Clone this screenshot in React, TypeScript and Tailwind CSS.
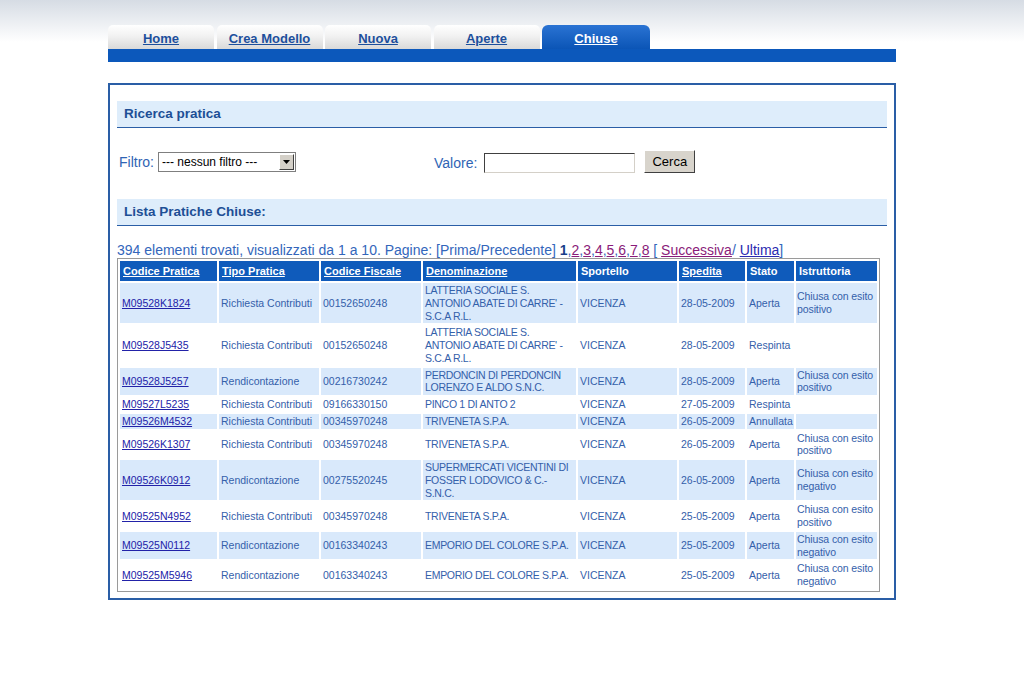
import React from "react";

// Pratiche chiuse — lista con ricerca
type Row = {
  codice: string;
  tipo: string;
  cf: string;
  denominazione: string;
  sportello: string;
  spedita: string;
  stato: string;
  istruttoria: string;
};

const rows: Row[] = [
  { codice: "M09528K1824", tipo: "Richiesta Contributi", cf: "00152650248", denominazione: "LATTERIA SOCIALE S. ANTONIO ABATE DI CARRE' - S.C.A R.L.", sportello: "VICENZA", spedita: "28-05-2009", stato: "Aperta", istruttoria: "Chiusa con esito positivo" },
  { codice: "M09528J5435", tipo: "Richiesta Contributi", cf: "00152650248", denominazione: "LATTERIA SOCIALE S. ANTONIO ABATE DI CARRE' - S.C.A R.L.", sportello: "VICENZA", spedita: "28-05-2009", stato: "Respinta", istruttoria: "" },
  { codice: "M09528J5257", tipo: "Rendicontazione", cf: "00216730242", denominazione: "PERDONCIN DI PERDONCIN LORENZO E ALDO S.N.C.", sportello: "VICENZA", spedita: "28-05-2009", stato: "Aperta", istruttoria: "Chiusa con esito positivo" },
  { codice: "M09527L5235", tipo: "Richiesta Contributi", cf: "09166330150", denominazione: "PINCO 1 DI ANTO 2", sportello: "VICENZA", spedita: "27-05-2009", stato: "Respinta", istruttoria: "" },
  { codice: "M09526M4532", tipo: "Richiesta Contributi", cf: "00345970248", denominazione: "TRIVENETA S.P.A.", sportello: "VICENZA", spedita: "26-05-2009", stato: "Annullata", istruttoria: "" },
  { codice: "M09526K1307", tipo: "Richiesta Contributi", cf: "00345970248", denominazione: "TRIVENETA S.P.A.", sportello: "VICENZA", spedita: "26-05-2009", stato: "Aperta", istruttoria: "Chiusa con esito positivo" },
  { codice: "M09526K0912", tipo: "Rendicontazione", cf: "00275520245", denominazione: "SUPERMERCATI VICENTINI DI FOSSER LODOVICO & C.- S.N.C.", sportello: "VICENZA", spedita: "26-05-2009", stato: "Aperta", istruttoria: "Chiusa con esito negativo" },
  { codice: "M09525N4952", tipo: "Richiesta Contributi", cf: "00345970248", denominazione: "TRIVENETA S.P.A.", sportello: "VICENZA", spedita: "25-05-2009", stato: "Aperta", istruttoria: "Chiusa con esito positivo" },
  { codice: "M09525N0112", tipo: "Rendicontazione", cf: "00163340243", denominazione: "EMPORIO DEL COLORE S.P.A.", sportello: "VICENZA", spedita: "25-05-2009", stato: "Aperta", istruttoria: "Chiusa con esito negativo" },
  { codice: "M09525M5946", tipo: "Rendicontazione", cf: "00163340243", denominazione: "EMPORIO DEL COLORE S.P.A.", sportello: "VICENZA", spedita: "25-05-2009", stato: "Aperta", istruttoria: "Chiusa con esito negativo" },
];

const tabs = ["Home", "Crea Modello", "Nuova", "Aperte", "Chiuse"];

const headers: { label: string; w: string; link: boolean }[] = [
  { label: "Codice Pratica", w: "w-[97px]", link: true },
  { label: "Tipo Pratica", w: "w-[100px]", link: true },
  { label: "Codice Fiscale", w: "w-[100px]", link: true },
  { label: "Denominazione", w: "w-[153px]", link: true },
  { label: "Sportello", w: "w-[99px]", link: false },
  { label: "Spedita", w: "w-[66px]", link: true },
  { label: "Stato", w: "w-[47px]", link: false },
  { label: "Istruttoria", w: "w-[81px]", link: false },
];

function SectionHeader({ title }: { title: string }) {
  return (
    <div className="h-[27px] bg-[#deedfb] border-b border-[#2a5ea6] pl-[7px] flex items-center text-[13.5px] font-bold text-[#1d4f96]">
      {title}
    </div>
  );
}

export default function App() {
  return (
    <div className="w-[1024px] h-[674px] bg-[linear-gradient(to_bottom,#d6dce4_0px,#ffffff_42px)] font-['Liberation_Sans',Arial,sans-serif]">
      <div className="ml-[108px] w-[788px] pt-[25px]">
        {/* tabs */}
        <div className="flex gap-[2.5px] h-[24px]">
          {tabs.map((t) => {
            const active = t === "Chiuse";
            return (
              <div
                key={t}
                className={
                  active
                    ? "w-[108px] rounded-t-[6px] bg-[linear-gradient(to_bottom,#2a73d3,#0b55b6)] flex items-center justify-center pt-[3px]"
                    : "w-[106px] rounded-t-[5px] bg-[linear-gradient(to_bottom,#ffffff_0%,#f2f2f2_45%,#d9d9d9_100%)] flex items-center justify-center pt-[3px]"
                }
              >
                <span
                  className={
                    active
                      ? "text-[13px] font-bold underline text-white"
                      : "text-[13px] font-bold underline text-[#1d4f9c]"
                  }
                >
                  {t}
                </span>
              </div>
            );
          })}
        </div>
        <div className="h-[13px] bg-[#0c58bb]" />

        {/* main box */}
        <div className="mt-[21px] h-[517px] border-2 border-[#2a5ea6] px-[7px] pt-[16px]">
          <SectionHeader title="Ricerca pratica" />

          <div className="mt-[22px] h-[23px] flex items-center text-[14px] text-[#2f64b4]">
            <span className="ml-[2px] mt-[2px]">Filtro:</span>
            <div className="ml-[4px] w-[138px] h-[20px] border border-[#7f7f7f] bg-white flex items-center">
              <span className="flex-1 pl-[3px] text-[12px] text-black leading-none">--- nessun filtro ---</span>
              <div className="w-[15px] h-[16px] mr-[1px] bg-[#d4d0c8] border border-t-white border-l-white border-r-[#404040] border-b-[#404040] flex items-center justify-center">
                <svg width="7" height="4" viewBox="0 0 7 4">
                  <path d="M0 0h7L3.5 4z" fill="#000" />
                </svg>
              </div>
            </div>
            <span className="ml-[138px] mt-[4px]">Valore:</span>
            <div className="ml-[7px] w-[151px] h-[20px] mt-[2px] bg-white border border-t-[#404040] border-l-[#404040] border-r-[#d4d0c8] border-b-[#d4d0c8]" />
            <div className="ml-[9px] w-[51px] h-[23px] bg-[#d8d4cc] border border-t-white border-l-white border-r-[#404040] border-b-[#404040] flex items-center justify-center text-[13px] text-black">
              Cerca
            </div>
          </div>

          <div className="mt-[26px]">
            <SectionHeader title="Lista Pratiche Chiuse:" />
          </div>

          <div className="mt-[16px] text-[14px] leading-[16px] text-[#3366bb] whitespace-nowrap">
            394 elementi trovati, visualizzati da 1 a 10. Pagine: [Prima/Precedente]{" "}
            <span className="font-bold text-[#1a3f8a]">1</span>
            {["2", "3", "4", "5", "6", "7", "8"].map((n) => (
              <span key={n}>
                ,<span className="underline text-[#8a1b7a]">{n}</span>
              </span>
            ))}{" "}
            [ <span className="underline text-[#8a1b7a]">Successiva</span>/{" "}
            <span className="underline text-[#2a2ab0]">Ultima</span>]
          </div>

          <table className="w-[763px] table-fixed border-separate border-spacing-[2px] border border-[#9a9a9a] leading-[12.75px]">
            <thead>
              <tr>
                {headers.map((h) => (
                  <th
                    key={h.label}
                    className={`${h.w} h-[20px] bg-[#0f5bbb] text-white text-left text-[11px] font-bold px-[3px] py-0`}
                  >
                    <span className={h.link ? "underline" : ""}>{h.label}</span>
                  </th>
                ))}
              </tr>
            </thead>
            <tbody>
              {rows.map((r, i) => {
                const bg = i % 2 === 0 ? "bg-[#d9e9fb]" : "bg-white";
                const cell = `${bg} px-[2px] py-px align-middle text-[10.5px] text-[#3460aa]`;
                return (
                  <tr key={r.codice}>
                    <td className={cell}>
                      <span className="underline text-[#2222a8]">{r.codice}</span>
                    </td>
                    <td className={cell}>{r.tipo}</td>
                    <td className={cell}>{r.cf}</td>
                    <td className={`${cell} !pr-0 tracking-[-0.3px]`}>{r.denominazione}</td>
                    <td className={cell}>{r.sportello}</td>
                    <td className={cell}>{r.spedita}</td>
                    <td className={cell}>{r.stato}</td>
                    <td className={`${cell} !px-[1px] tracking-[-0.1px]`}>{r.istruttoria}</td>
                  </tr>
                );
              })}
            </tbody>
          </table>
        </div>
      </div>
    </div>
  );
}
